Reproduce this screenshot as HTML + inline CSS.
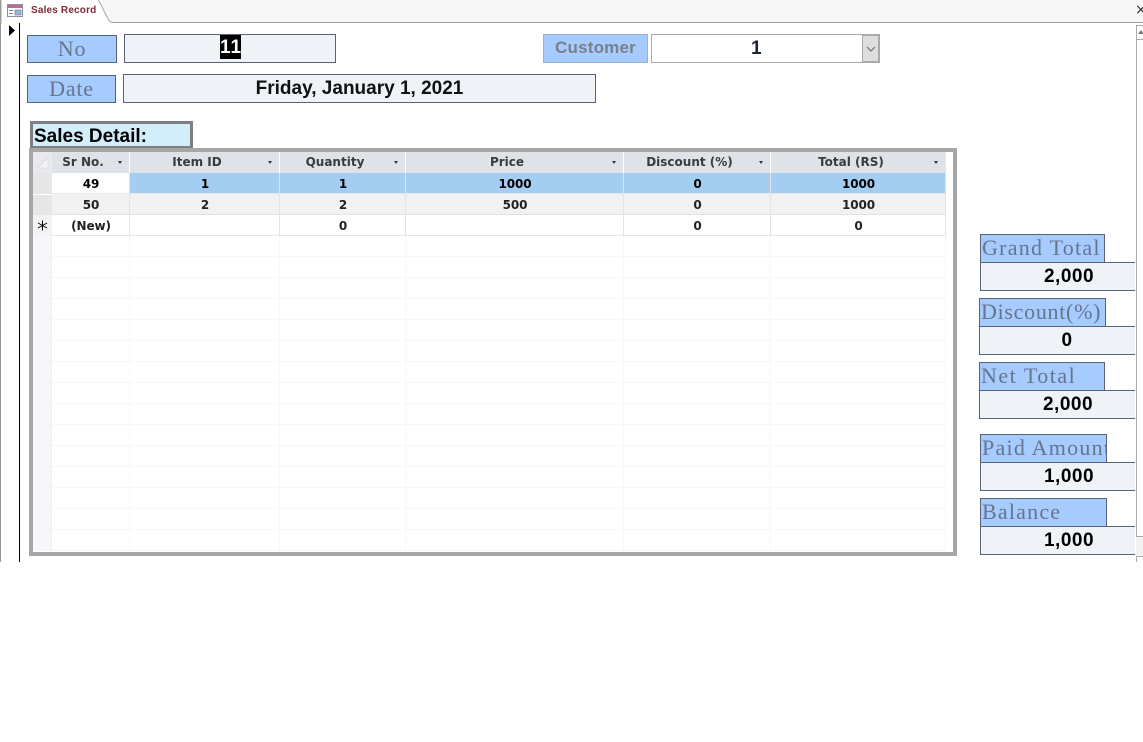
<!DOCTYPE html>
<html><head><meta charset="utf-8"><style>
html,body{margin:0;padding:0;background:#fff;width:1143px;height:742px;overflow:hidden}
div,span{position:absolute;box-sizing:border-box}
.lb{background:#a6cbff;border:1px solid #586476;font-family:"Liberation Serif",serif;color:#66748c;font-size:22px;text-align:center;line-height:26px;overflow:hidden;white-space:nowrap;letter-spacing:.8px}
.rl{text-align:left;padding-left:1px;letter-spacing:1.25px}
.v{background:#eff2f7;border:1px solid #586476;font-family:"Liberation Sans",sans-serif;font-weight:bold;color:#000;overflow:hidden;white-space:nowrap}
.o{border-right:0;width:155px}
.t{font-family:"Liberation Sans",sans-serif;font-weight:bold;font-size:19px;color:#000;line-height:30px;text-align:center;white-space:nowrap;letter-spacing:.5px}
.c{font-family:"DejaVu Sans",sans-serif;font-weight:bold;font-size:12px;color:#222;text-align:center;line-height:23px;height:21px;white-space:nowrap;letter-spacing:-.1px}
.h{font-family:"DejaVu Sans",sans-serif;font-weight:bold;font-size:12px;color:#3b3b3b;text-align:center;line-height:21px;height:21px;background:#dfe2e6;border-right:1px solid #fff;white-space:nowrap;padding-right:15px}
.a{width:0;height:0;border-left:2.5px solid transparent;border-right:2.5px solid transparent;border-top:3px solid #333}
.hl{left:33px;width:912px;height:1px;background:#f6f6f8}
.vl{top:236px;height:315px;width:1px;background:#f7f7f9}
</style></head><body>
<!-- tab bar -->
<div style="left:0;top:0;width:1143px;height:23px;background:#f7f7f7;border-bottom:1px solid #a0a0a0"></div>
<svg style="position:absolute;left:0;top:0" width="112" height="24"><path d="M1 24V0H98C100 2 101 5 103 9L108 19C109 21 110 22 112 22.5V24Z" fill="#fff"/><path d="M1 24V0M98 0C100 2 101 5 103 9L108 19C109 21 110 22 112 22.5" fill="none" stroke="#a8a8a8"/>
<rect x="7.5" y="4.5" width="15" height="12" fill="#fff" stroke="#8a8fa8"/><rect x="8" y="5" width="14" height="3" fill="#c06a90"/><path d="M9 10.5h4M9 13.500h4" stroke="#6d86ad" fill="none"/><rect x="15" y="10" width="6" height="5" fill="#9fb4d3" stroke="#55739f" stroke-width=".6"/></svg>
<div style="left:31px;top:4px;font:bold 10px/14px 'Liberation Sans',sans-serif;color:#7f2a34;white-space:nowrap;letter-spacing:.17px">Sales Record</div>
<div style="left:1135px;top:3px;font:14px/14px 'DejaVu Sans',sans-serif;color:#333">×</div>
<!-- left rails -->
<div style="left:0;top:0;width:1px;height:562px;background:#999"></div>
<div style="left:19px;top:23px;width:1px;height:539px;background:#000"></div>
<svg style="position:absolute;left:8px;top:25px" width="9" height="12"><path d="M1 0L7 5.500L1 11Z" fill="#000"/></svg>
<!-- right scrollbar -->
<div style="left:1136px;top:25px;width:7px;height:512px;border-left:1px solid #aaa;background:#fff"></div>
<div style="left:1136px;top:25px;width:7px;height:15px;border:1px solid #aaa;border-right:0;background:#fff"></div>
<svg style="position:absolute;left:1138px;top:30px" width="5" height="5"><path d="M0 4L3 0L5 3V4Z" fill="#777"/></svg>
<div style="left:1136px;top:536px;width:7px;height:20px;background:#f2f2f2;border-top:1px solid #aaa"></div>
<div style="left:1136px;top:556px;width:7px;height:6px;border-top:1px solid #aaa;border-left:1px solid #aaa"></div>
<!-- header controls -->
<div class="lb" style="left:27px;top:35px;width:90px;height:28px">No</div>
<div class="v" style="left:124px;top:34px;width:212px;height:29px"></div>
<div class="t" style="left:220px;top:35px;width:21px;height:24px;background:#000;color:#fff;line-height:25px;letter-spacing:1px">11</div>
<div class="lb" style="left:27px;top:75px;width:89px;height:28px">Date</div>
<div class="v" style="left:123px;top:74px;width:473px;height:29px"></div>
<div class="t" style="left:123px;top:74px;width:473px;height:28px;letter-spacing:0;color:#111">Friday, January 1, 2021</div>
<div style="left:543px;top:34px;width:105px;height:29px;background:#a6cbff;border:1px solid #9fb0c8;font:bold 17px/26px 'Liberation Sans',sans-serif;color:#777f8b;text-align:center;letter-spacing:.2px">Customer</div>
<div style="left:651px;top:34px;width:229px;height:29px;background:#fff;border:1px solid #aaa"></div>
<div class="t" style="left:651px;top:34px;width:211px;color:#1c2433">1</div>
<div style="left:862px;top:34px;width:18px;height:29px;background:#dedede;border:2px solid #aaa;border-left:1px solid #aaa"></div>
<svg style="position:absolute;left:866px;top:46px" width="10" height="7"><path d="M1 1L5 5L9 1" fill="none" stroke="#666"/></svg>
<!-- sales detail -->
<div style="left:30px;top:121px;width:163px;height:27px;background:#d2eefb;border:3px solid #7f7f7f;border-bottom:2px solid #7f7f7f;font:bold 19px/26px 'Liberation Sans',sans-serif;color:#000;padding-left:1px;white-space:nowrap">Sales Detail:</div>
<!-- grid -->
<div style="left:29px;top:148px;width:928px;height:408px;border:4px solid #a6a6a6;background:#fff"></div>
<div style="left:33px;top:152px;width:19px;height:399px;background:#f6f6fd"></div>
<div style="left:33px;top:152px;width:19px;height:21px;background:#e7e9ec"></div>
<svg style="position:absolute;left:37px;top:157px" width="12" height="12"><path d="M1 11L11 1V11Z" fill="#f3f4f6" stroke="#d3d5d9" stroke-width=".6"/></svg>
<div style="left:33px;top:173px;width:19px;height:42px;background:#e6e6e6"></div>
<div style="left:33px;top:193.500px;width:19px;height:1px;background:#fff"></div>
<div style="left:33px;top:215px;width:19px;height:21px;background:#f3f3f6"></div>
<svg style="position:absolute;left:37px;top:220px" width="11" height="11"><path d="M5.500 .5V10.500M1 3L10 8M1 8L10 3" fill="none" stroke="#000" stroke-width="1"/></svg>
<div class="h" style="left:52px;top:152px;width:78px">Sr No.</div>
<div class="h" style="left:130px;top:152px;width:150px">Item ID</div>
<div class="h" style="left:280px;top:152px;width:126px">Quantity</div>
<div class="h" style="left:406px;top:152px;width:218px">Price</div>
<div class="h" style="left:624px;top:152px;width:147px">Discount (%)</div>
<div class="h" style="left:771px;top:152px;width:175px;border-right:0">Total (RS)</div>
<div class="a" style="left:118px;top:161px"></div><div class="a" style="left:268px;top:161px"></div><div class="a" style="left:394px;top:161px"></div><div class="a" style="left:612px;top:161px"></div><div class="a" style="left:759px;top:161px"></div><div class="a" style="left:934px;top:161px"></div>
<!-- rows -->
<div style="left:130px;top:173px;width:816px;height:21px;background:#a3cdf1"></div>
<div style="left:52px;top:194px;width:894px;height:21px;background:#f1f1f1"></div>
<div class="hl" style="top:193px;left:52px;width:894px;background:#e8e8e8"></div>
<div class="hl" style="top:214px;left:52px;width:894px;background:#e2e2e2"></div>
<div class="hl" style="top:235px;left:52px;width:894px;background:#e6e6e6"></div>
<div class="hl" style="top:256px"></div><div class="hl" style="top:277px"></div><div class="hl" style="top:298px"></div><div class="hl" style="top:319px"></div><div class="hl" style="top:340px"></div><div class="hl" style="top:361px"></div><div class="hl" style="top:382px"></div><div class="hl" style="top:403px"></div><div class="hl" style="top:424px"></div><div class="hl" style="top:445px"></div><div class="hl" style="top:466px"></div><div class="hl" style="top:487px"></div><div class="hl" style="top:508px"></div><div class="hl" style="top:529px"></div><div class="hl" style="top:550px"></div>
<div class="vl" style="left:51px;background:#ececf2"></div><div class="vl" style="left:129px"></div><div class="vl" style="left:279px"></div><div class="vl" style="left:405px"></div><div class="vl" style="left:623px"></div><div class="vl" style="left:770px"></div><div class="vl" style="left:945px"></div>
<div class="vl" style="left:129px;top:173px;height:63px;background:#e2e2e2"></div><div class="vl" style="left:279px;top:173px;height:63px;background:#e2e2e2"></div><div class="vl" style="left:405px;top:173px;height:63px;background:#e2e2e2"></div><div class="vl" style="left:623px;top:173px;height:63px;background:#e2e2e2"></div><div class="vl" style="left:770px;top:173px;height:63px;background:#e2e2e2"></div><div class="vl" style="left:945px;top:173px;height:63px;background:#e2e2e2"></div>
<div class="c" style="left:52px;top:173px;width:78px;color:#000">49</div><div class="c" style="left:130px;top:173px;width:150px;color:#000">1</div><div class="c" style="left:280px;top:173px;width:126px;color:#000">1</div><div class="c" style="left:406px;top:173px;width:218px;color:#000">1000</div><div class="c" style="left:624px;top:173px;width:147px;color:#000">0</div><div class="c" style="left:771px;top:173px;width:175px;color:#000">1000</div>
<div class="c" style="left:52px;top:194px;width:78px">50</div><div class="c" style="left:130px;top:194px;width:150px">2</div><div class="c" style="left:280px;top:194px;width:126px">2</div><div class="c" style="left:406px;top:194px;width:218px">500</div><div class="c" style="left:624px;top:194px;width:147px">0</div><div class="c" style="left:771px;top:194px;width:175px">1000</div>
<div class="c" style="left:52px;top:215px;width:78px">(New)</div><div class="c" style="left:280px;top:215px;width:126px">0</div><div class="c" style="left:624px;top:215px;width:147px">0</div><div class="c" style="left:771px;top:215px;width:175px">0</div>
<!-- right panel -->
<div class="lb rl" style="left:980px;top:234px;width:125px;height:29px">Grand Total</div>
<div class="v o" style="left:980px;top:262px;height:29px"></div>
<div class="t" style="left:1029px;top:262px;width:80px">2,000</div>
<div class="lb rl" style="left:979px;top:298px;width:127px;height:29px;letter-spacing:.7px">Discount(%)</div>
<div class="v o" style="left:979px;top:326px;width:156px;height:29px"></div>
<div class="t" style="left:1027px;top:326px;width:80px">0</div>
<div class="lb rl" style="left:979px;top:362px;width:126px;height:29px;letter-spacing:1.5px">Net Total</div>
<div class="v o" style="left:979px;top:390px;width:156px;height:29px"></div>
<div class="t" style="left:1028px;top:390px;width:80px">2,000</div>
<div class="lb rl" style="left:980px;top:434px;width:127px;height:29px">Paid Amount</div>
<div class="v o" style="left:980px;top:462px;height:29px"></div>
<div class="t" style="left:1029px;top:462px;width:80px">1,000</div>
<div class="lb rl" style="left:980px;top:498px;width:127px;height:29px;letter-spacing:1.2px">Balance</div>
<div class="v o" style="left:980px;top:526px;height:29px"></div>
<div class="t" style="left:1029px;top:526px;width:80px">1,000</div>
</body></html>
